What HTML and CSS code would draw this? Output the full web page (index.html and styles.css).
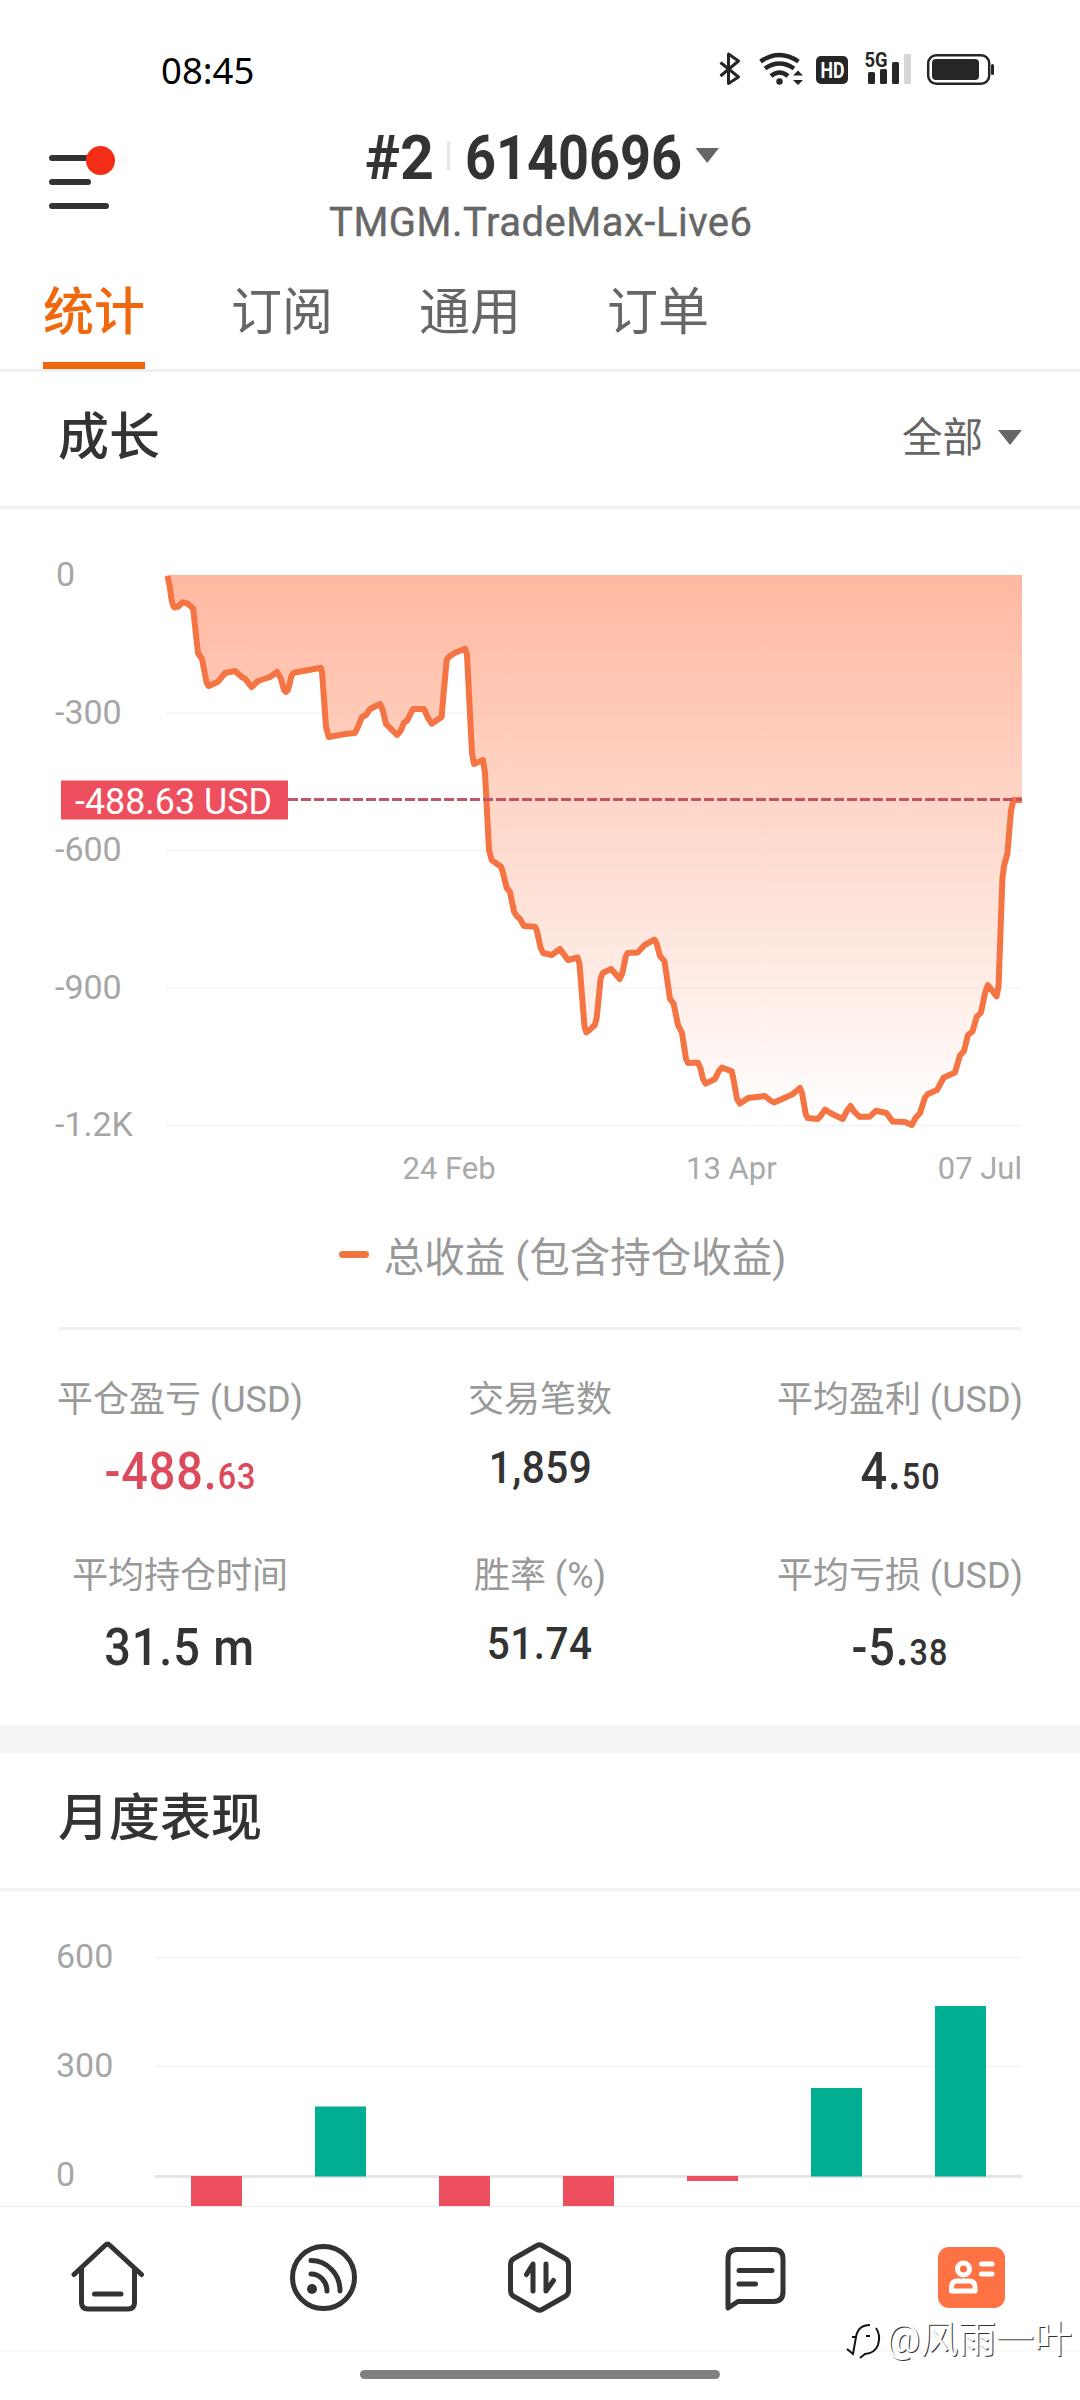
FILE: index.html
```html
<!DOCTYPE html>
<html lang="zh-CN">
<head>
<meta charset="utf-8">
<title>统计</title>
<link rel="stylesheet" href="styles.css">
</head>
<body>
<div class="status">
  <span class="clock">08:45</span>
  <svg class="status-icons" width="280" height="40" viewBox="716 50 280 40">
    <path class="bt" d="M720.5 62.5L738.5 77L728.5 83.5V54L738.5 61L720.5 76"/>
    <g class="wifi">
      <path d="M760.5 61.5Q779.5 48.5 798.5 61.5"/>
      <path d="M765 68.5Q779.5 58.500 794 68.5"/>
      <path d="M771 76Q779.500 69 788 76"/>
    </g>
    <circle class="ink" cx="779.5" cy="81.500" r="3.200"/>
    <path class="ink" d="M793 75.500L798 70.500L803 75.500ZM793 80L798 85L803 80Z"/>
    <rect class="ink" x="816" y="56" width="32" height="28" rx="5"/>
    <text class="hd" x="820.5" y="78" textLength="24" lengthAdjust="spacingAndGlyphs">HD</text>
    <text class="fiveg" x="864.500" y="67" textLength="23" lengthAdjust="spacingAndGlyphs">5G</text>
    <rect class="ink" x="868" y="72" width="7" height="12" rx="1.500"/>
    <rect class="ink" x="880" y="69" width="7" height="15" rx="1.500"/>
    <rect class="ink" x="892" y="62" width="7" height="22" rx="1.500"/>
    <rect class="faint" x="904" y="54" width="7" height="30" rx="1"/>
    <rect class="cell" x="928.200" y="55.200" width="61" height="28.600" rx="8"/>
    <rect class="ink" x="932" y="59" width="47" height="21" rx="4"/>
    <rect class="ink" x="991" y="64" width="3" height="11" rx="1.500"/>
  </svg>
</div>

<header class="header">
  <svg width="1080" height="150" viewBox="0 110 1080 150">
    <path class="menu" d="M52 158H95M52 182H88M52 206H106"/>
    <circle class="dot" cx="100.500" cy="160.500" r="14.500"/>
    <text class="title" x="365" y="179" textLength="69" lengthAdjust="spacingAndGlyphs">#2</text>
    <rect class="bar" x="447" y="141" width="3" height="29"/>
    <text class="title" x="465" y="179" textLength="217" lengthAdjust="spacingAndGlyphs">6140696</text>
    <path class="caret" d="M695.500 148H719L707.200 163Z"/>
    <text class="server" x="329" y="236" textLength="423" lengthAdjust="spacing">TMGM.TradeMax-Live6</text>
  </svg>
</header>

<nav class="tabs">
  <span class="tab active">统计</span>
  <span class="tab">订阅</span>
  <span class="tab">通用</span>
  <span class="tab">订单</span>
</nav>

<section class="growth">
  <div class="head">
    <h2>成长</h2>
    <div class="filter">全部<svg width="24" height="15" viewBox="0 0 24 15"><path class="caret" d="M0 0H24L12 15Z"/></svg></div>
  </div>
  <svg class="chart" width="1080" height="691" viewBox="0 509 1080 691">
    <defs>
      <linearGradient id="fill" gradientUnits="userSpaceOnUse" x1="0" y1="575" x2="0" y2="1125">
        <stop offset="0" stop-color="#ffb8a0"/>
        <stop offset="1" stop-color="#ffb8a0" stop-opacity="0"/>
      </linearGradient>
    </defs>
    <path class="grid" d="M166 575.500H1022M166 713H1022M166 850.500H1022M166 988H1022M166 1125.500H1022"/>
    <g class="axis">
      <text x="56" y="586">0</text>
      <text x="55" y="724">-300</text>
      <text x="55" y="861">-600</text>
      <text x="55" y="999">-900</text>
      <text x="55" y="1136">-1.2K</text>
    </g>
    <path fill="url(#fill)" d="M167 575L170 588L172 603L174 607.700L178 606.700L182.700 602.300L187 603.300L193 608L198 653L202 659L206.700 683L208.700 686L218 681.700L225 673L235 671L241.700 677L245 678.700L251.700 687L258 681L270 677L277 672L280.700 678L284 690L286 692L288 690L291.700 675L294 672.700L320.700 667.700L322 671.700L326 726.700L328.700 737L345 734L355 733L358 726.700L362 717L366 715L370 709L380 704L382.700 710L386 724L390.700 728.700L397 735L400.700 730.700L404 722.700L407 720.700L413 709H424L428 718L431.700 723.700L435.700 721L441.700 716.700L443 700L446.700 660L449 656.700L455 652.700L465 648.700L467 655L472 753L474 764L483 760L485 773L489 850L491.700 860L501 866.700L503 873L506.700 888L510 892L514 911.700L516.700 916L520 919L524 926L535 926.700L536.700 930L540.700 948L543 953L551.700 955L560 949L563.400 953.600L568 960L577.600 957.500L579.500 964L584.500 1026.800L586.400 1032.500L590 1029.600L594.800 1025L596.700 1018L600.600 978.600L602.800 973L611 969L614.700 973L619.700 979L622.400 973L625.800 956.400L627.700 953L637.700 952.500L644.600 945L654.500 939.600L656.400 943L660 956L664.500 961.400L666 971.400L670 999L673.600 1003.600L678 1025L682 1033L686 1059L688 1063L697.800 1062.500L700.400 1068L703 1079L705.800 1083.600L715 1079L719 1070.700L722 1067.500L731.800 1071.400L733.700 1080.400L737 1099L740 1103.600L748 1098L765 1096L769.700 1100L774 1102.500L782 1099L792 1094.600L800 1088L802 1093L805.700 1114L807.600 1118L817.500 1119L820.600 1116L825 1109.600L832 1114L842.800 1119L846.600 1111.400L850.500 1106L854 1111.400L859.600 1116.800H869.600L876 1110.700L886.400 1113L892.600 1121.400L904.800 1122L911.700 1125L915.500 1118L920 1113L925 1097.500L927.800 1094L937 1090L943.800 1077.500L955 1072.500L960 1055.400L964 1051L968 1035L972.500 1031.400L976.700 1016.800L981 1012.500L985 993L987.800 985L991 989L996.600 996.400L998.600 985.700L1002.400 878.600L1004 866L1007.400 853.600L1011 810.700L1013.500 800H1022V575Z"/>
    <path class="line" d="M167.500 576L170 588Q172 607 174.500 607.500L178 606.700L182.700 602.300L187 603.300L193 608.300Q194 615 194.700 623L198 653L202 659L206.700 683L208.700 686L218 681.700L225 673L235 671L241.700 677L245 678.700L251.700 687L258 681L270 677L277 672L280.700 678L284 690L286 692L288 690L291.700 675L294 672.700L320.700 667.700L322 671.700L326 726.700L328.700 737L345 734L355 733L358 726.700L362 717L366 715L370 709L380 704L382.700 710L386 724L390.700 728.700L397 735L400.700 730.700L404 722.700L407 720.700L413 709H424L428 718L431.700 723.700L435.700 721L441.700 716.700L443 700L446.700 660L449 656.700L455 652.700L465 648.700L467 655L472 753L474 764L483 760L485 773L489 850L491.700 860L501 866.700L503 873L506.700 888L510 892L514 911.700L516.700 916L520 919L524 926L535 926.700L536.700 930L540.700 948L543 953L551.700 955L560 949L563.400 953.600L568 960L577.600 957.500L579.500 964L584.500 1026.800L586.400 1032.500L590 1029.600L594.800 1025L596.700 1018L600.600 978.600L602.800 973L611 969L614.700 973L619.700 979L622.400 973L625.800 956.400L627.700 953L637.700 952.500L644.600 945L654.500 939.600L656.400 943L660 956L664.500 961.400L666 971.400L670 999L673.600 1003.600L678 1025L682 1033L686 1059L688 1063L697.800 1062.500L700.400 1068L703 1079L705.800 1083.600L715 1079L719 1070.700L722 1067.500L731.800 1071.400L733.700 1080.400L737 1099L740 1103.600L748 1098L765 1096L769.700 1100L774 1102.500L782 1099L792 1094.600L800 1088L802 1093L805.700 1114L807.600 1118L817.500 1119L820.600 1116L825 1109.600L832 1114L842.800 1119L846.600 1111.400L850.500 1106L854 1111.400L859.600 1116.800H869.600L876 1110.700L886.400 1113L892.600 1121.400L904.800 1122L911.700 1125L915.500 1118L920 1113L925 1097.500L927.800 1094L937 1090L943.800 1077.500L955 1072.500L960 1055.400L964 1051L968 1035L972.500 1031.400L976.700 1016.800L981 1012.500L985 993L987.800 985L991 989L996.600 996.400L998.600 985.700L1002.400 878.600L1004 866L1007.400 853.600L1011 810.700L1013.500 800H1022"/>
    <path class="dash" d="M288 799.500H1022"/>
    <rect class="red" x="61" y="780.500" width="227" height="39"/>
    <text class="tag" x="75" y="813.500" textLength="197" lengthAdjust="spacingAndGlyphs">-488.63 USD</text>
    <g class="dates">
      <text x="402.500" y="1179">24 Feb</text>
      <text x="686" y="1179">13 Apr</text>
      <text x="1022" y="1179" text-anchor="end">07 Jul</text>
    </g>
  </svg>
  <div class="legend"><i></i><span>总收益 (包含持仓收益)</span></div>
  <div class="stats">
    <div class="stat"><label>平仓盈亏 (USD)</label><b class="big neg">-488.<small>63</small></b></div>
    <div class="stat"><label>交易笔数</label><b>1,859</b></div>
    <div class="stat"><label>平均盈利 (USD)</label><b class="big">4.<small>50</small></b></div>
    <div class="stat"><label>平均持仓时间</label><b class="big">31.5 m</b></div>
    <div class="stat"><label>胜率 (%)</label><b>51.74</b></div>
    <div class="stat"><label>平均亏损 (USD)</label><b class="big">-5.<small>38</small></b></div>
  </div>
</section>

<section class="monthly">
  <div class="head"><h2>月度表现</h2></div>
  <svg class="chart" width="1080" height="315" viewBox="0 1891 1080 315">
    <path class="grid" d="M155 1957.500H1022M155 2066.500H1022"/>
    <path class="zero" d="M155 2176.500H1022"/>
    <g class="axis">
      <text x="56" y="1967.500">600</text>
      <text x="56" y="2076.500">300</text>
      <text x="56" y="2186">0</text>
    </g>
    <g class="red">
      <rect x="191" y="2176" width="51" height="40"/>
      <rect x="439" y="2176" width="51" height="40"/>
      <rect x="563" y="2176" width="51" height="40"/>
      <rect x="687" y="2176" width="51" height="5"/>
    </g>
    <g class="green">
      <rect x="315" y="2106.500" width="51" height="70"/>
      <rect x="811" y="2088" width="51" height="88.500"/>
      <rect x="935" y="2006" width="51" height="170.500"/>
    </g>
  </svg>
</section>

<footer class="dock">
  <svg width="1080" height="142" viewBox="0 2207 1080 142">
    <g class="icon">
      <path d="M74 2274.500L105.500 2245Q107.500 2243 109.500 2245L141.500 2274.500M81.500 2269V2302.500Q81.500 2309 88 2309H128Q134.500 2309 134.500 2302.500V2269M94.500 2294H121"/>
      <circle cx="323.500" cy="2277.500" r="31"/>
      <path d="M311 2274A16 17 0 0 1 327 2291M311 2260.500A29 30 0 0 1 340 2291"/>
      <path d="M537 2245.500Q539.500 2244 542 2245.500L565 2258.500Q568.500 2260.500 568.500 2264.500V2290.500Q568.500 2294.500 565 2296.500L542 2309.500Q539.500 2311 537 2309.500L514 2296.500Q510.500 2294.500 510.500 2290.500V2264.500Q510.500 2260.500 514 2258.500Z"/>
      <path d="M533 2291V2264L526.500 2274.500M546 2264V2291L553.500 2280.500"/>
      <path d="M728 2308V2259Q728 2249.500 737.500 2249.500H773.500Q783 2249.500 783 2259V2292Q783 2301.500 773.500 2301.500H738Z"/>
      <path d="M739 2270.500H772M739 2284H755.500"/>
    </g>
    <circle class="bulb" cx="312" cy="2289" r="5"/>
    <rect class="card" x="938" y="2247" width="67" height="61" rx="11"/>
    <g class="person">
      <circle cx="963.500" cy="2269" r="6"/>
      <path d="M951.500 2291V2287Q951.500 2281 957.500 2281H969Q975 2281 975 2287V2291ZM981.500 2264H992M981.500 2274H992"/>
    </g>
  </svg>
  <div class="gesture"><i></i></div>
  <div class="mark">
    <svg width="40" height="42" viewBox="0 0 40 42"><path class="shade" d="M3 31L9 36L12 19H8M12 19Q14 7 26 7M22 18H26M32 10Q37 17 34 27Q31 35 21 36L16 40"/></svg>
    <span>@风雨一叶</span>
  </div>
</footer>
</body>
</html>
```
FILE: styles.css
```css
* { box-sizing: border-box; }
body {
  margin: 0;
  width: 1080px;
  height: 2400px;
  overflow: hidden;
  display: flex;
  flex-direction: column;
  background: #fff;
  color: #333;
  font-family: Roboto, "Noto Sans CJK SC", sans-serif;
}
svg { display: block; flex: none; }

.status {
  height: 110px;
  padding: 50px 84px 0 161px;
  display: flex;
  justify-content: space-between;
}
.clock { font: 36.500px/40px "Noto Sans", sans-serif; color: #000; }
.bt { fill: none; stroke: #262626; stroke-width: 3; stroke-linejoin: round; }
.wifi { fill: none; stroke: #262626; stroke-width: 4.500; }
.ink { fill: #262626; }
.faint { fill: #d6d6d6; }
.cell { fill: none; stroke: #262626; stroke-width: 2.500; }
.hd { fill: #fff; font-size: 22px; font-weight: 700; }
.fiveg { fill: #262626; font-size: 20px; font-weight: 700; }

.header { height: 150px; }
.menu { fill: none; stroke: #333; stroke-width: 6; stroke-linecap: round; }
.dot { fill: #f42e16; }
.title { font-size: 61.500px; font-weight: 700; fill: #333; }
.bar { fill: #e6e6e6; }
.caret { fill: #666; }
.server { font-size: 40px; font-weight: 400; fill: #666; stroke: #666; stroke-width: .4; }

.tabs {
  height: 112px;
  padding: 24px 43px 0;
  display: flex;
  gap: 86px;
  border-bottom: 3px solid #f0f0f0;
}
.tab { font-size: 51px; line-height: 58px; height: 85px; width: 102px; color: #666; }
.active { color: #f0680e; font-weight: 500; border-bottom: 7px solid #f0680e; }

.head {
  height: 137px;
  padding: 0 58px 3px;
  display: flex;
  align-items: center;
  justify-content: space-between;
  border-bottom: 3px solid #f2f2f2;
}
h2 { margin: 0; font-size: 51px; line-height: 60px; font-weight: 500; }
.filter { display: flex; align-items: center; gap: 15px; font-size: 40.500px; line-height: 50px; color: #666; }

.grid { fill: none; stroke: #f7f7f7; stroke-width: 2.500; }
.zero { fill: none; stroke: #e5e5e5; stroke-width: 3; }
.axis { font-size: 34px; fill: #a6a6a6; }
.dates { font-size: 31px; fill: #aaa; }
.line { fill: none; stroke: #f47443; stroke-width: 6; stroke-linejoin: round; }
.dash { fill: none; stroke: #c25565; stroke-width: 3; stroke-dasharray: 10 3; }
.red { fill: #ed4f5e; }
.green { fill: #00ae92; }
.tag { font-size: 36px; fill: #fff; }

.legend {
  height: 130px;
  margin: 0 58px;
  padding: 0 0 18px 45px;
  display: flex;
  align-items: center;
  justify-content: center;
  gap: 15px;
  font-size: 40.500px;
  color: #999;
  border-bottom: 3px solid #f0f0f0;
}
.legend i { width: 30px; height: 7px; border-radius: 4px; background: #f0753f; }
.stats {
  height: 395px;
  padding-top: 46px;
  display: grid;
  grid-template-columns: repeat(3, 1fr);
  grid-auto-rows: 176px;
}
.stat { display: flex; flex-direction: column; align-items: center; }
.stat label { font-size: 36px; line-height: 48px; color: #999; }
.stat b { margin-top: 16px; font-size: 45px; line-height: 56px; font-weight: 500; transform: scaleX(.9); letter-spacing: .5px; white-space: nowrap; }
.stat .big { margin-top: 14px; font-size: 52px; line-height: 68px; letter-spacing: 1px; }
.stat small { font-size: 36px; }
.stat .neg { color: #dc4a5c; }

.monthly { height: 481px; border-top: 28px solid #f5f5f5; overflow: hidden; }
.monthly .head { height: 138px; }

.dock { position: relative; height: 194px; border-top: 1px solid #ececec; }
.icon { fill: none; stroke: #333; stroke-width: 5; stroke-linecap: round; stroke-linejoin: round; }
.bulb { fill: #333; }
.card { fill: #ff7243; }
.person { fill: none; stroke: #fff; stroke-width: 5; stroke-linecap: round; stroke-linejoin: round; }
.gesture { height: 51px; border-top: 3px solid #f9f9f9; padding-top: 18px; display: flex; justify-content: center; }
.gesture i { width: 360px; height: 9px; border-radius: 5px; background: #808080; }
.mark { position: absolute; right: 8px; top: 110px; display: flex; align-items: center; gap: 2px; }
.mark span { font-size: 38px; line-height: 44px; color: #fff; text-shadow: 1px 1px 0 #333; }
.shade { fill: none; stroke: #111; stroke-width: 2; }
```
